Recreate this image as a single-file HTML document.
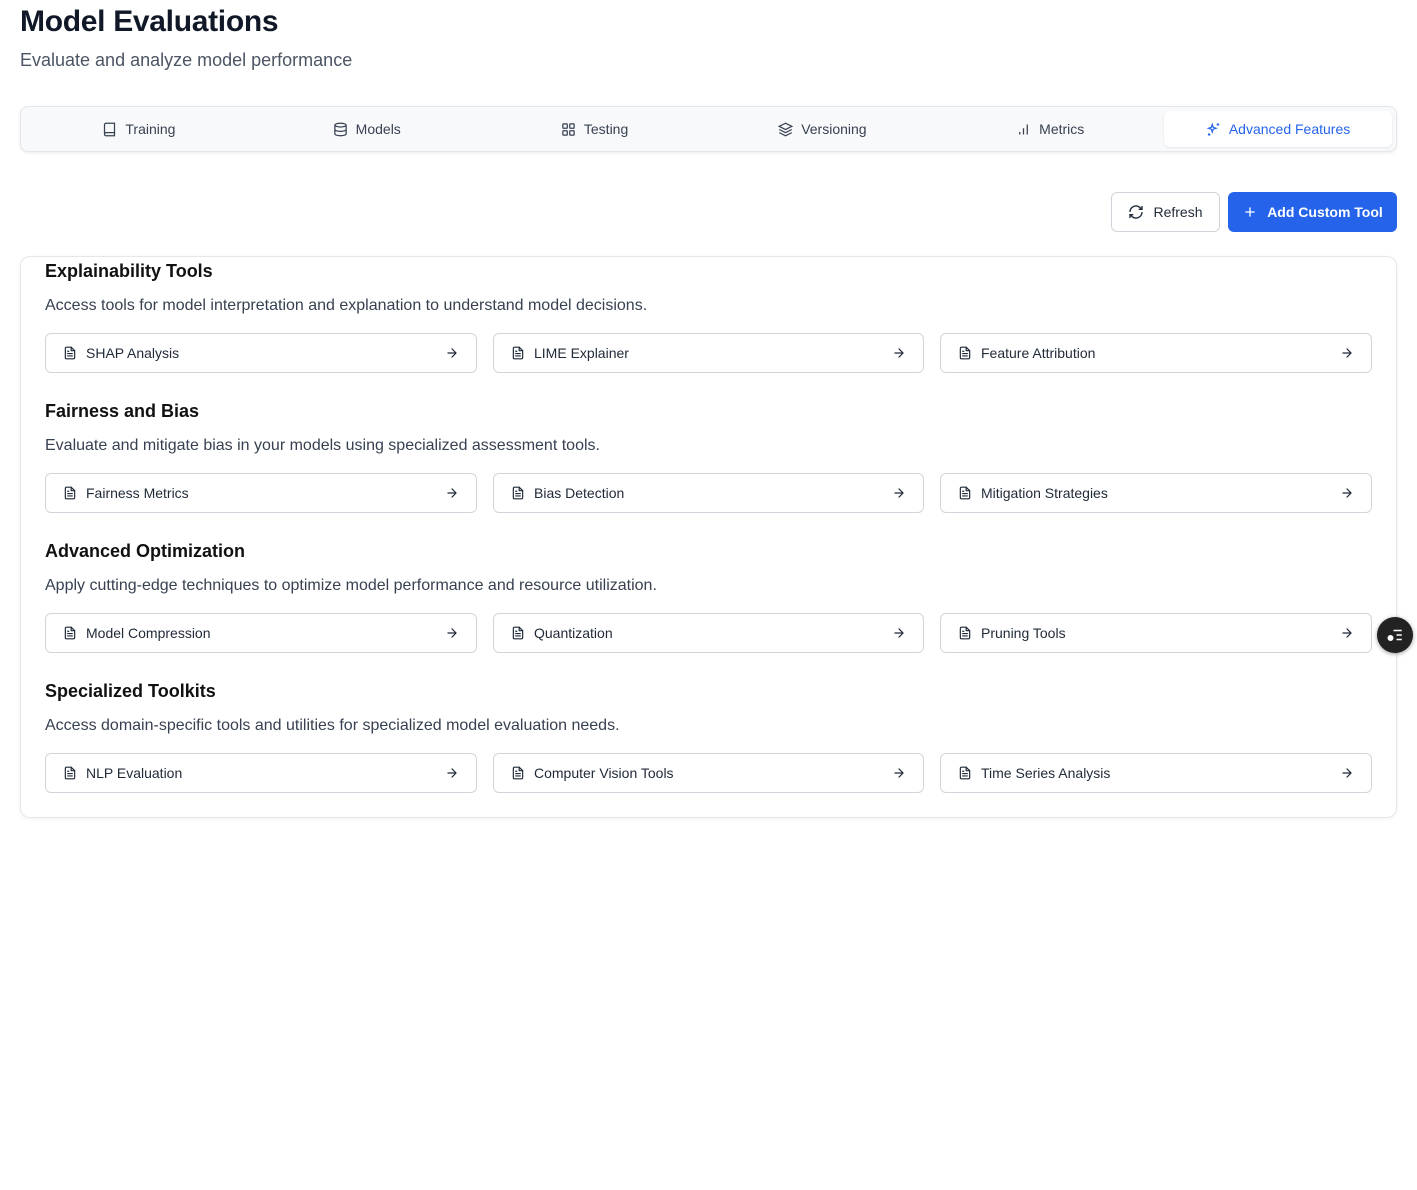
<!DOCTYPE html>
<html><head><meta charset="utf-8"><style>
*{box-sizing:border-box;margin:0;padding:0}
body{width:1417px;height:1190px;background:#fff;font-family:"Liberation Sans",sans-serif;color:#111827;position:relative;overflow:hidden}
h1{position:absolute;left:20px;top:5px;font-size:30px;font-weight:700;color:#111827;letter-spacing:-0.3px}
.sub{position:absolute;left:20px;top:50px;font-size:18px;color:#4b5563}
.tabs{position:absolute;left:20px;top:106px;width:1377px;height:46px;background:#f8f9fb;border:1px solid #e5e7eb;border-radius:8px;box-shadow:0 1px 3px rgba(0,0,0,.08);display:flex;padding:4px}
.tab{flex:1;display:flex;align-items:center;justify-content:center;gap:8px;font-size:14px;color:#374151;border-radius:6px}
.tab.act{background:#fff;color:#2563eb;box-shadow:0 1px 2px rgba(0,0,0,.08)}
.tab svg{width:15px;height:15px}
.btn{position:absolute;top:192px;height:40px;border-radius:6px;display:flex;align-items:center;justify-content:center;gap:9px;font-size:14px}
.ref{left:1111px;width:109px;border:1px solid #d1d5db;color:#1f2937;background:#fff}
.add{left:1228px;width:169px;background:#2563eb;color:#fff;font-weight:700}
.card{position:absolute;left:20px;top:256px;width:1377px;height:562px;border:1px solid #e5e7eb;border-radius:10px;box-shadow:0 1px 3px rgba(0,0,0,.06)}
.sec{position:absolute;left:24px;width:1327px}
.sec h2{font-size:18px;font-weight:700;color:#111;position:absolute;top:4px}
.sec p{font-size:16px;color:#374151;position:absolute;top:40px}
.row{position:absolute;top:76px;left:0;display:flex;gap:16px}
.it{width:432px;height:40px;border:1px solid #d1d5db;border-radius:6px;display:flex;align-items:center;padding:0 17px;font-size:14px;color:#1f2937;gap:9px}
.it:nth-child(2){width:431px}
.it .n{flex:1}
.fab{position:absolute;left:1377px;top:617px;width:36px;height:36px;border-radius:50%;background:#222;box-shadow:0 1px 4px rgba(0,0,0,.4);display:flex;align-items:center;justify-content:center}
</style></head><body>
<svg width="0" height="0" style="position:absolute"><defs>
<symbol id="doc" viewBox="0 0 24 24"><g fill="none" stroke="#1f2937" stroke-width="2" stroke-linecap="round" stroke-linejoin="round"><path d="M14 2H6a2 2 0 0 0-2 2v16a2 2 0 0 0 2 2h12a2 2 0 0 0 2-2V8z"/><path d="M14 2v6h6M8 13h8M8 17h8M8 9h2"/></g></symbol>
<symbol id="arr" viewBox="0 0 24 24"><g fill="none" stroke="#1f2937" stroke-width="2" stroke-linecap="round" stroke-linejoin="round"><path d="M5 12h14M12 5l7 7-7 7"/></g></symbol>
</defs></svg>
<h1>Model Evaluations</h1>
<div class="sub">Evaluate and analyze model performance</div>
<div class="tabs">
<div class="tab"><svg viewBox="0 0 24 24" fill="none" stroke="#374151" stroke-width="2"><path d="M4 19.5v-15A2.5 2.5 0 0 1 6.5 2H20v20H6.5a2.5 2.5 0 0 1 0-5H20"/></svg>Training</div>
<div class="tab"><svg viewBox="0 0 24 24" fill="none" stroke="#374151" stroke-width="2"><ellipse cx="12" cy="5" rx="9" ry="3"/><path d="M3 5v14a9 3 0 0 0 18 0V5M3 12a9 3 0 0 0 18 0"/></svg>Models</div>
<div class="tab"><svg viewBox="0 0 24 24" fill="none" stroke="#374151" stroke-width="2"><rect x="3" y="3" width="7" height="7" rx="1"/><rect x="14" y="3" width="7" height="7" rx="1"/><rect x="3" y="14" width="7" height="7" rx="1"/><rect x="14" y="14" width="7" height="7" rx="1"/></svg>Testing</div>
<div class="tab"><svg viewBox="0 0 24 24" fill="none" stroke="#374151" stroke-width="2"><path d="M12 2 2 7l10 5 10-5-10-5zM2 12l10 5 10-5M2 17l10 5 10-5"/></svg>Versioning</div>
<div class="tab"><svg viewBox="0 0 24 24" fill="none" stroke="#374151" stroke-width="2"><path d="M6 20v-4M12 20V10M18 20V4"/></svg>Metrics</div>
<div class="tab act"><svg viewBox="0 0 24 24" fill="none" stroke="#2563eb" stroke-width="2"><path d="M10 4l1.5 4.5L16 10l-4.5 1.5L10 16l-1.5-4.5L4 10l4.5-1.5z"/><path d="M19 2v4M17 4h4M5 18v4M3 20h4"/></svg>Advanced Features</div>
</div>
<div class="btn ref"><svg width="16" height="16" viewBox="0 0 24 24" fill="none" stroke="#1f2937" stroke-width="2"><path d="M3 12a9 9 0 0 1 15-6.7L21 8M21 3v5h-5M21 12a9 9 0 0 1-15 6.7L3 16M3 21v-5h5"/></svg>Refresh</div>
<div class="btn add"><svg width="16" height="16" viewBox="0 0 24 24" fill="none" stroke="#fff" stroke-width="2"><path d="M12 5v14M5 12h14"/></svg>Add Custom Tool</div>
<div class="card">
<div class="sec" style="top:0"><h2>Explainability Tools</h2><p>Access tools for model interpretation and explanation to understand model decisions.</p><div class="row">
<div class="it"><svg width="14" height="14"><use href="#doc"/></svg><span class="n">SHAP Analysis</span><svg width="14" height="14"><use href="#arr"/></svg></div>
<div class="it"><svg width="14" height="14"><use href="#doc"/></svg><span class="n">LIME Explainer</span><svg width="14" height="14"><use href="#arr"/></svg></div>
<div class="it"><svg width="14" height="14"><use href="#doc"/></svg><span class="n">Feature Attribution</span><svg width="14" height="14"><use href="#arr"/></svg></div>
</div></div>
<div class="sec" style="top:140px"><h2>Fairness and Bias</h2><p>Evaluate and mitigate bias in your models using specialized assessment tools.</p><div class="row">
<div class="it"><svg width="14" height="14"><use href="#doc"/></svg><span class="n">Fairness Metrics</span><svg width="14" height="14"><use href="#arr"/></svg></div>
<div class="it"><svg width="14" height="14"><use href="#doc"/></svg><span class="n">Bias Detection</span><svg width="14" height="14"><use href="#arr"/></svg></div>
<div class="it"><svg width="14" height="14"><use href="#doc"/></svg><span class="n">Mitigation Strategies</span><svg width="14" height="14"><use href="#arr"/></svg></div>
</div></div>
<div class="sec" style="top:280px"><h2>Advanced Optimization</h2><p>Apply cutting-edge techniques to optimize model performance and resource utilization.</p><div class="row">
<div class="it"><svg width="14" height="14"><use href="#doc"/></svg><span class="n">Model Compression</span><svg width="14" height="14"><use href="#arr"/></svg></div>
<div class="it"><svg width="14" height="14"><use href="#doc"/></svg><span class="n">Quantization</span><svg width="14" height="14"><use href="#arr"/></svg></div>
<div class="it"><svg width="14" height="14"><use href="#doc"/></svg><span class="n">Pruning Tools</span><svg width="14" height="14"><use href="#arr"/></svg></div>
</div></div>
<div class="sec" style="top:420px"><h2>Specialized Toolkits</h2><p>Access domain-specific tools and utilities for specialized model evaluation needs.</p><div class="row">
<div class="it"><svg width="14" height="14"><use href="#doc"/></svg><span class="n">NLP Evaluation</span><svg width="14" height="14"><use href="#arr"/></svg></div>
<div class="it"><svg width="14" height="14"><use href="#doc"/></svg><span class="n">Computer Vision Tools</span><svg width="14" height="14"><use href="#arr"/></svg></div>
<div class="it"><svg width="14" height="14"><use href="#doc"/></svg><span class="n">Time Series Analysis</span><svg width="14" height="14"><use href="#arr"/></svg></div>
</div></div>
</div>
<div class="fab"><svg width="18" height="18" viewBox="0 0 24 24" fill="none" stroke="#fff" stroke-width="2"><path d="M10 6h11M14 12h7M14 18h7"/><circle cx="6" cy="16" r="3" fill="#fff"/></svg></div>
</body></html>
